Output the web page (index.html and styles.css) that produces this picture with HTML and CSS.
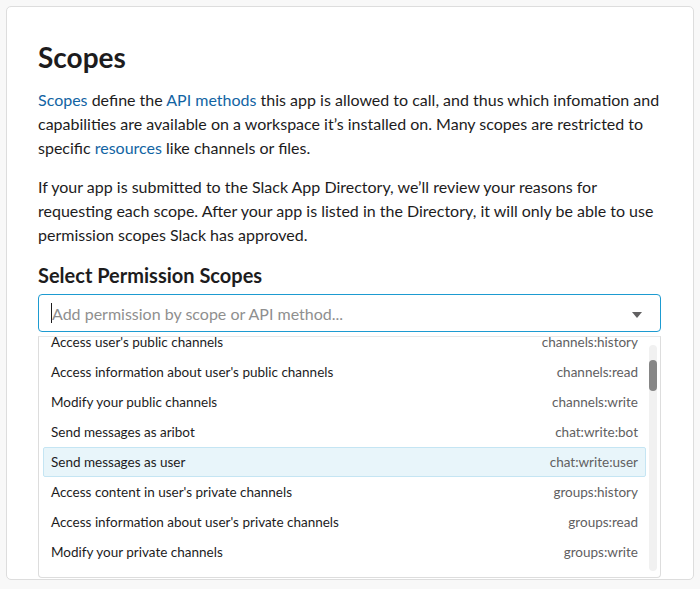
FILE: index.html
```html
<!DOCTYPE html>
<html>
<head>
<meta charset="utf-8">
<link rel="stylesheet" href="styles.css">
</head>
<body>
<div class="card">
  <h1 class="title">Scopes</h1>
  <p class="text"><a class="link">Scopes</a> define the <a class="link">API methods</a> this app is allowed to call, and thus which infomation and capabilities are available on a workspace it’s installed on. Many scopes are restricted to specific <a class="link">resources</a> like channels or files.</p>
  <p class="text">If your app is submitted to the Slack App Directory, we’ll review your reasons for requesting each scope. After your app is listed in the Directory, it will only be able to use permission scopes Slack has approved.</p>
  <h2 class="subtitle">Select Permission Scopes</h2>
  <div class="select">
    <span class="caret"></span>
    <span class="placeholder">Add permission by scope or API method...</span>
    <span class="arrow"></span>
  </div>
  <div class="menu">
    <ul class="options">
      <li class="option"><span class="label">Access user's public channels</span><span class="scope">channels:history</span></li>
      <li class="option"><span class="label">Access information about user's public channels</span><span class="scope">channels:read</span></li>
      <li class="option"><span class="label">Modify your public channels</span><span class="scope">channels:write</span></li>
      <li class="option"><span class="label">Send messages as aribot</span><span class="scope">chat:write:bot</span></li>
      <li class="option active"><span class="label">Send messages as user</span><span class="scope">chat:write:user</span></li>
      <li class="option"><span class="label">Access content in user's private channels</span><span class="scope">groups:history</span></li>
      <li class="option"><span class="label">Access information about user's private channels</span><span class="scope">groups:read</span></li>
      <li class="option"><span class="label">Modify your private channels</span><span class="scope">groups:write</span></li>
    </ul>
    <div class="scrollbar"><div class="thumb"></div></div>
  </div>
</div>
</body>
</html>
```
FILE: styles.css
```css
* { box-sizing: border-box; }
html, body { margin: 0; padding: 0; }
body {
  background: #f8f8f8;
  font-family: Lato, "Noto Sans", sans-serif;
  color: #1d1c1d;
  width: 700px;
  height: 589px;
  overflow: hidden;
}
.card {
  margin: 6px 6px 0 6px;
  width: 688px;
  height: 574px;
  background: #fff;
  border: 1px solid #dddddd;
  border-radius: 5px;
  padding: 32px 32px 0 31px;
  overflow: hidden;
}
.title {
  margin: 0 0 13px 0;
  font-size: 28px;
  line-height: 36px;
  font-weight: 700;
}
.text {
  margin: 0 0 15px 0;
  font-size: 16px;
  line-height: 24px;
}
.link { color: #1264a3; text-decoration: none; }
.subtitle {
  margin: 16px 0 7px 0;
  font-size: 20px;
  line-height: 24px;
  font-weight: 700;
}
.select {
  position: relative;
  height: 38px;
  border: 1px solid #1d9bd1;
  border-radius: 4px;
  display: flex;
  align-items: center;
  padding: 0 12px;
}
.caret {
  width: 1px;
  height: 20px;
  background: #1d1c1d;
}
.placeholder {
  font-size: 16px;
  color: #8f8f8f;
  flex: 1;
}
.arrow {
  width: 0;
  height: 0;
  border-left: 5px solid transparent;
  border-right: 5px solid transparent;
  border-top: 6px solid #616061;
  margin-top: 3px;
  margin-right: 6px;
}
.menu {
  position: relative;
  margin-top: 4px;
  height: 242px;
  border: 1px solid #dddddd;
  border-top-color: #e8e8e8;
  border-radius: 0 0 4px 4px;
  overflow: hidden;
  background: #fff;
}
.options {
  list-style: none;
  margin: -10px 14px 0 4px;
  padding: 0;
}
.option {
  height: 30px;
  border: 1px solid transparent;
  border-radius: 2px;
  display: flex;
  align-items: center;
  justify-content: space-between;
  padding: 0 7px;
  font-size: 13.5px;
}
.option.active {
  background: #e8f5fa;
  border-color: #c5e5f3;
}
.label { color: #1d1c1d; }
.scope { color: #616061; }
.scrollbar {
  position: absolute;
  top: 8px;
  bottom: 6px;
  right: 3px;
  width: 8px;
  border-radius: 4px;
  background: #f1f1f1;
}
.thumb {
  margin-top: 15px;
  height: 31px;
  border-radius: 4px;
  background: #868686;
}
```
